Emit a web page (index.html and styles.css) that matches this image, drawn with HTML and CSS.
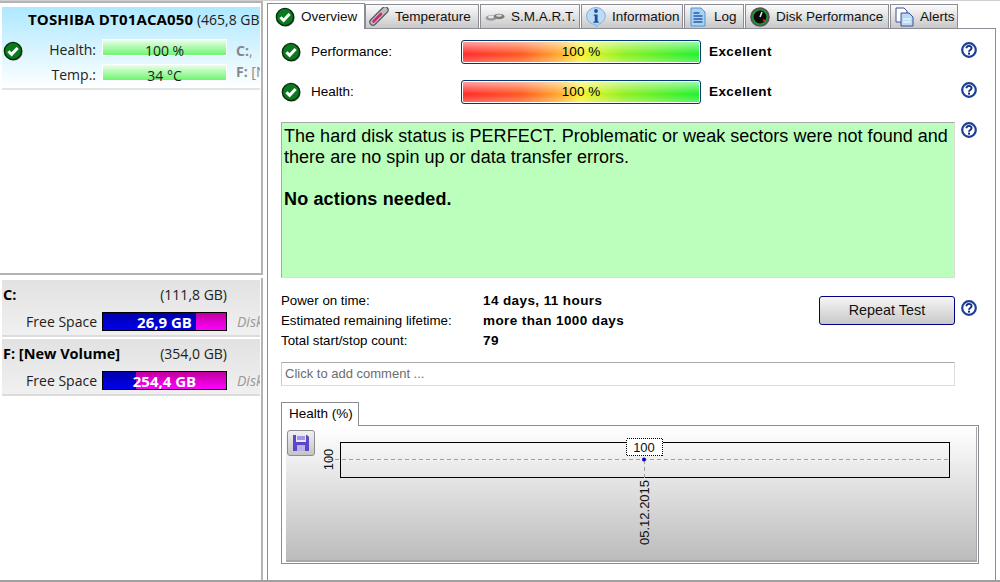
FILE: index.html
```html
<!DOCTYPE html>
<html lang="en">
<head>
<meta charset="utf-8">
<title>Hard Disk Sentinel</title>
<link rel="stylesheet" href="styles.css">
</head>
<body>
<svg class="defs" width="0" height="0" aria-hidden="true">
  <symbol id="ok" viewBox="0 0 20 20">
    <circle cx="10.800" cy="10.800" r="8.800" fill="#777"/>
    <circle cx="10" cy="10" r="8.600" fill="#0b7a1e" stroke="#062c0c" stroke-width="1.400"/>
    <path d="M5.400 10.200l3.200 3.200 6-6.400" fill="none" stroke="#fff" stroke-width="3"/>
  </symbol>
  <symbol id="help" viewBox="0 0 16 16">
    <circle cx="8" cy="8" r="6.800" fill="#fff" stroke="#1c3f9c" stroke-width="2.200"/>
    <path d="M5.400 6.300c0-3.200 5.200-3.200 5.200-.2 0 1.900-2.600 1.800-2.600 3.600" fill="none" stroke="#14307c" stroke-width="1.900"/>
    <rect x="7" y="10.600" width="2" height="2" fill="#14307c"/>
  </symbol>
</svg>
<div class="app">
  <aside class="side">
    <section class="side-pane disks">
      <div class="disk-card">
        <div class="disk-title"><b>TOSHIBA DT01ACA050</b> (465,8 GB)</div>
        <div class="disk-body">
          <svg class="ico-ok"><use href="#ok"/></svg>
          <div class="disk-grid">
            <span class="disk-label">Health:</span><span class="meter">100 %</span>
            <span class="disk-label">Temp.:</span><span class="meter">34 °C</span>
          </div>
          <div class="disk-vols"><span><b>C:</b>,</span><span><b>F:</b> [New</span></div>
        </div>
      </div>
    </section>
    <section class="side-pane vols">
      <div class="vol-card">
        <div class="vol-head"><b>C:</b><span>(111,8 GB)</span></div>
        <div class="vol-row"><span class="vol-label">Free Space</span><span class="free free-c">26,9 GB</span><i>Disk</i></div>
      </div>
      <div class="vol-card">
        <div class="vol-head"><b>F: [New Volume]</b><span>(354,0 GB)</span></div>
        <div class="vol-row"><span class="vol-label">Free Space</span><span class="free free-f">254,4 GB</span><i>Disk</i></div>
      </div>
    </section>
  </aside>
  <main class="main">
    <nav class="tabs">
      <div class="tab active t1"><svg class="ico-tab"><use href="#ok"/></svg>Overview</div>
      <div class="tab t2">
        <svg class="ico-tab" viewBox="0 0 20 20"><path d="M16 3L4 15" stroke="#5c5c5c" stroke-width="7.500" stroke-linecap="round"/><path d="M16 3L4 15" stroke="#bdbdbd" stroke-width="5" stroke-linecap="round"/><path d="M12 7L4.500 14.500" stroke="#d8207a" stroke-width="2.600" stroke-linecap="round"/></svg>Temperature</div>
      <div class="tab t3">
        <svg class="ico-tab" viewBox="0 0 20 20"><ellipse cx="6" cy="11" rx="5.500" ry="2.800" fill="#9a9a9a"/><ellipse cx="14" cy="9.500" rx="5.500" ry="2.800" fill="#7c7c7c"/><ellipse cx="6" cy="10" rx="3" ry="1.200" fill="#e8e8e8"/><ellipse cx="14" cy="8.600" rx="3" ry="1.200" fill="#dcdcdc"/></svg>S.M.A.R.T.</div>
      <div class="tab t4">
        <svg class="ico-tab" viewBox="0 0 20 20"><path d="M10 0.500a9.500 8.500 0 0 1 3 16.500L10 20v-2.500A9.500 8.500 0 0 1 10 .5z" fill="#bcdcf6" stroke="#7fb0dc"/><circle cx="10" cy="4" r="1.900" fill="#1c4c9c"/><path d="M7.800 7.500h3.800v7h1.200v1.200H7.400v-1.200h1.400V8.700h-1z" fill="#1c4c9c"/></svg>Information</div>
      <div class="tab t5">
        <svg class="ico-tab" viewBox="0 0 20 20"><path d="M3 1h10l4 4v14H3z" fill="#a9d3f5" stroke="#4d94d8"/><path d="M5.500 6h6M5.500 9h9M5.500 12h9M5.500 15h9" stroke="#2a5aa8" stroke-width="1.500"/></svg>Log</div>
      <div class="tab t6">
        <svg class="ico-tab" viewBox="0 0 20 20"><circle cx="10" cy="10" r="9.800" fill="#555"/><circle cx="10" cy="10" r="7.200" fill="#0c0c0c" stroke="#1d9a35" stroke-width="1.600"/><path d="M10 10l2-5" stroke="#eee" stroke-width="1.500"/><path d="M13 13l2 1" stroke="#e02020" stroke-width="2"/></svg>Disk Performance</div>
      <div class="tab t7">
        <svg class="ico-tab" viewBox="0 0 20 20"><path d="M2 1h8l3 3v11H2z" fill="#fff" stroke="#3d4f96"/><path d="M7 6h8l4 4v9H7z" fill="#b9d8f4" stroke="#3d4f96"/><path d="M9 12h8M9 15h8" stroke="#fff"/></svg>Alerts</div>
    </nav>
    <div class="tab-body">
      <div class="rate-row">
        <svg class="ico-ok"><use href="#ok"/></svg>
        <span class="rate-label">Performance:</span>
        <span class="rate-bar">100 %</span>
        <b class="rate-word">Excellent</b>
        <svg class="ico-help"><use href="#help"/></svg>
      </div>
      <div class="rate-row">
        <svg class="ico-ok"><use href="#ok"/></svg>
        <span class="rate-label">Health:</span>
        <span class="rate-bar">100 %</span>
        <b class="rate-word">Excellent</b>
        <svg class="ico-help"><use href="#help"/></svg>
      </div>
      <div class="msg-row">
        <div class="msg">
          <p>The hard disk status is PERFECT. Problematic or weak sectors were not found and there are no spin up or data transfer errors.</p>
          <p class="msg-strong">No actions needed.</p>
        </div>
        <svg class="ico-help"><use href="#help"/></svg>
      </div>
      <div class="stats-row">
        <dl class="stats">
          <dt>Power on time:</dt><dd>14 days, 11 hours</dd>
          <dt>Estimated remaining lifetime:</dt><dd>more than 1000 days</dd>
          <dt>Total start/stop count:</dt><dd>79</dd>
        </dl>
        <button class="repeat" type="button">Repeat Test</button>
        <svg class="ico-help"><use href="#help"/></svg>
      </div>
      <div class="comment">Click to add comment ...</div>
      <div class="chart-tab">Health (%)</div>
      <div class="chart-frame">
        <div class="chart">
          <button class="save" type="button" aria-label="Save">
            <svg viewBox="0 0 16 16" width="16" height="16"><path d="M0 0h14l2 2v14H0z" fill="#5a48c8"/><path d="M3 0h10v7H3z" fill="#e8e6fa"/><path d="M4 2h8M4 4h8" stroke="#5a48c8"/><path d="M4 10h8v6H4z" fill="#b9b2e8"/></svg>
          </button>
          <svg class="plot" width="690" height="133" viewBox="0 0 690 133">
            <rect x="54.500" y="15.500" width="609" height="35" fill="none" stroke="#000"/>
            <path d="M42 32.500H663" stroke="#a0a0a0" stroke-dasharray="4 3"/>
            <path d="M358.500 33V52" stroke="#a0a0a0" stroke-dasharray="4 3"/>
            <circle cx="358" cy="32.500" r="2" fill="#0000c0"/>
            <rect x="340.500" y="11.500" width="36" height="17" fill="#fff" stroke="#000" stroke-dasharray="1 1" shape-rendering="crispEdges"/>
            <text class="plot-text" x="358" y="25" text-anchor="middle">100</text>
            <text class="plot-text" transform="translate(47 32.500) rotate(-90)" text-anchor="middle">100</text>
            <text class="plot-text" transform="translate(363 118) rotate(-90)">05.12.2015</text>
          </svg>
        </div>
      </div>
    </div>
  </main>
</div>
</body>
</html>
```
FILE: styles.css
```css
* { box-sizing: border-box; }
html, body { margin: 0; padding: 0; }
body {
  width: 1000px;
  height: 582px;
  overflow: hidden;
  background: #fff;
  color: #000;
  font-family: "Liberation Sans", Arial, sans-serif;
}
.defs { position: absolute; }
.app {
  display: flex;
  height: 582px;
  border-top: 1px solid #d0d0d0;
  border-bottom: 2px solid #a0a0a4;
}
.ico-ok { width: 20px; height: 20px; flex: none; }
.ico-help { width: 16px; height: 16px; flex: none; }
.ico-tab { width: 20px; height: 20px; flex: none; margin-right: 6px; }

/* left column */
.side {
  width: 263px;
  flex: none;
  display: flex;
  flex-direction: column;
  font-family: "Open Sans", sans-serif;
  font-size: 14px;
  color: #222;
}
.side-pane {
  border-top: 2px solid #b4b4b4;
  border-right: 2px solid #b4b4b4;
  padding-left: 2px;
  overflow: hidden;
}
.disks { height: 274px; padding-top: 4px; border-bottom: 2px solid #b4b4b4; }
.vols { flex: 1; margin-top: 3px; padding-top: 2px; border-top: 0; }
.disk-card {
  width: 258px;
  height: 83px;
  overflow: hidden;
  white-space: nowrap;
  background: linear-gradient(#aee8ff, #fff);
  border-bottom: 2px solid #e4e4e4;
}
.disk-title { padding: 2px 0 0 26px; height: 32px; line-height: 20px; }
.disk-title b { color: #000; font-size: 15px; letter-spacing: .15px; }
.disk-body { display: flex; height: 48px; }
.disk-body .ico-ok { margin: 2px 0 0 1px; }
.disk-grid {
  display: grid;
  flex: none;
  grid-template-columns: 79px 125px;
  grid-auto-rows: 17px;
  row-gap: 8px;
  align-items: center;
  align-content: start;
}
.disk-label { text-align: right; padding-right: 6px; line-height: 21px; height: 17px; }
.meter {
  height: 17px;
  line-height: 22px;
  text-align: center;
  border: 1px solid #fff;
  background: linear-gradient(#eaffea, #6ff56f);
}
.disk-vols {
  display: flex;
  flex-direction: column;
  margin: 1px 0 0 9px;
  color: #888;
  line-height: 21px;
}
.vol-card {
  width: 258px;
  height: 57px;
  margin-bottom: 2px;
  background: linear-gradient(#e2e2e2, #f0f0f0);
  border-bottom: 2px solid #dcdcdc;
  overflow: hidden;
  white-space: nowrap;
}
.vol-head {
  display: flex;
  justify-content: space-between;
  width: 225px;
  padding: 5px 0 0 1px;
  height: 32px;
  line-height: 20px;
}
.vol-head b { color: #000; font-size: 14.500px; }
.vol-row { display: flex; align-items: center; height: 19px; }
.vol-label { flex: none; width: 95px; text-align: right; color: #222; margin-right: 5px; line-height: 23px; }
.free {
  flex: none;
  width: 125px;
  height: 19px;
  border: 1px solid #000;
  color: #fff;
  font-size: 15px;
  font-weight: 700;
  text-align: center;
  line-height: 19px;
}
.free-c { background: linear-gradient(#c0009c, #ff00ff) right / 30px 100% no-repeat, linear-gradient(#0000a8, #0000f0); }
.free-f { background: linear-gradient(#c0009c, #ff00ff) right / 90px 100% no-repeat, linear-gradient(#0000a8, #0000f0); }
.vol-row i { margin-left: 10px; color: #999; }

/* right column */
.main {
  flex: 1;
  display: flex;
  flex-direction: column;
  padding: 2px 4px 0 4px;
  font-size: 13.500px;
}
.tabs { display: flex; height: 25px; position: relative; z-index: 1; }
.tab {
  display: flex;
  align-items: center;
  height: 24px;
  margin-top: 1px;
  margin-right: 1px;
  padding-left: 3px;
  white-space: nowrap;
  border: 1px solid #8c8c94;
  border-bottom: 0;
  background: linear-gradient(#fbfbfb, #c8c8c8);
  color: #111;
}
.tab.active {
  height: 26px;
  margin-top: 0;
  margin-right: 0;
  padding-left: 7px;
  background: #fff;
}
.t1 { width: 98px; }
.t2 { width: 114px; }
.t3 { width: 100px; padding-left: 4px; }
.t4 { width: 102px; padding-left: 4px; }
.t5 { width: 60px; }
.t6 { width: 144px; padding-left: 4px; }
.t7 { width: 68px; }
.tab-body {
  flex: 1;
  border: 1px solid #8c8c94;
  border-bottom: 0;
  padding: 11px 0 0 13px;
}
.rate-row {
  display: flex;
  align-items: center;
  height: 24px;
  margin-bottom: 16px;
}
.rate-row .ico-help { align-self: flex-start; margin-top: 2px; }
.rate-label { width: 150px; margin-left: 10px; padding-bottom: 2px; }
.rate-bar {
  width: 240px;
  height: 24px;
  line-height: 22px;
  text-align: center;
  border: 1px solid #003a78;
  border-radius: 3px;
  box-shadow: inset 0 0 0 1px #fff;
  background:
    linear-gradient(rgba(255,255,255,.6), rgba(255,255,255,0) 60%, rgba(255,255,255,.3)),
    linear-gradient(90deg, #ff2a2a, #ff5a20 25%, #ffb030 42%, #f4f42c 50%, #90f020 68%, #20f030);
}
.rate-word { width: 252px; margin-left: 8px; padding-bottom: 2px; letter-spacing: .4px; }
.msg-row { display: flex; align-items: flex-start; gap: 6px; margin-top: 18px; }
.msg {
  width: 674px;
  height: 156px;
  padding: 3px 2px;
  background: #bcffbc;
  border: 1px solid #a8a8a8;
  border-right-color: #ddd;
  border-bottom-color: #ddd;
  font-size: 18px;
  line-height: 21px;
  letter-spacing: .02px;
}
.msg p { margin: 0; }
.msg .msg-strong { font-weight: 700; margin-top: 21px; letter-spacing: .15px; }
.stats-row { display: flex; align-items: flex-start; margin-top: 12px; }
.stats {
  display: grid;
  grid-template-columns: 202px 336px;
  grid-auto-rows: 20px;
  margin: 0;
  line-height: 20px;
  padding-top: 1px;
  font-size: 13.300px;
}
.stats dd { margin: 0; font-weight: 700; letter-spacing: .4px; font-size: 13.500px; }
.repeat {
  width: 136px;
  height: 29px;
  padding: 0 0 2px;
  margin-top: 6px;
  border: 1px solid #000080;
  border-radius: 3px;
  background: linear-gradient(#f6f6f6, #c8c8c8);
  font: inherit;
  font-size: 14.400px;
  color: #111;
}
.stats-row .ico-help { margin: 10px 0 0 6px; }
.comment {
  width: 674px;
  height: 24px;
  margin-top: 11px;
  padding-left: 3px;
  line-height: 22px;
  font-size: 13px;
  color: #6c6c6c;
  border: 1px solid #ddd;
  border-top-color: #aaa;
  border-left-color: #ccc;
}
.chart-tab {
  width: 78px;
  height: 24px;
  margin-top: 16px;
  margin-bottom: -1px;
  padding-left: 7px;
  line-height: 22px;
  background: #fff;
  border: 1px solid #8c8c94;
  border-bottom: 0;
  position: relative;
}
.chart-frame {
  width: 698px;
  height: 139px;
  padding: 1px 1px 1px 4px;
  border: 1px solid #8c8c94;
}
.chart {
  position: relative;
  height: 135px;
  border-right: 1px solid #a8a8a8;
  border-bottom: 2px solid #a8a8a8;
  background: linear-gradient(#fff, #bcbcbc);
}
.plot { display: block; }
.plot-text { font-family: "Liberation Sans", sans-serif; font-size: 13px; fill: #111; }
.save {
  position: absolute;
  left: 1px;
  top: 3px;
  width: 28px;
  height: 26px;
  padding: 0;
  display: flex;
  align-items: center;
  justify-content: center;
  border: 1px solid #8c8c94;
  border-radius: 3px;
  background: linear-gradient(#f0f0f0, #c4c4c4);
}
```
